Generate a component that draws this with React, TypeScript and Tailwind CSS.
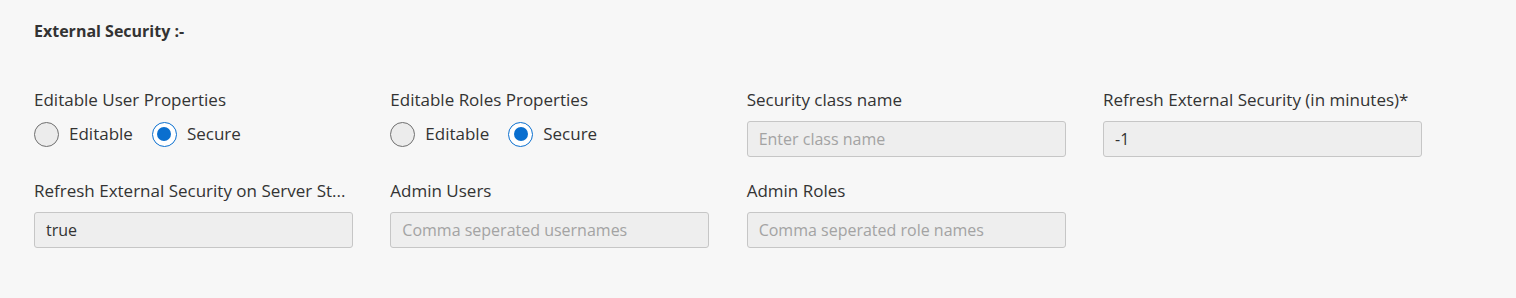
import React from "react";

const font = { fontFamily: '"Open Sans", "Noto Sans", sans-serif' };

function Radio({ checked, label }: { checked: boolean; label: string }) {
  return (
    <label className="flex items-center gap-[10px] h-[24px]">
      {checked ? (
        <span className="w-[25px] h-[25px] rounded-full border border-[#0a6fcf] bg-white flex items-center justify-center">
          <span className="w-[14px] h-[14px] rounded-full bg-[#0a6fcf]" />
        </span>
      ) : (
        <span className="w-[25px] h-[25px] rounded-full border border-[#6f6f6f] bg-[#ececec]" />
      )}
      <span className="text-[17px] text-[#333333]">{label}</span>
    </label>
  );
}

function RadioField({ label }: { label: string }) {
  return (
    <div className="flex flex-col">
      <div className="h-[24px] leading-[24px] text-[17px] text-[#333333] whitespace-nowrap">{label}</div>
      <div className="mt-[10px] flex items-center gap-[19px]">
        <Radio checked={false} label="Editable" />
        <Radio checked={true} label="Secure" />
      </div>
    </div>
  );
}

function InputField({ label, value, placeholder }: { label: string; value?: string; placeholder?: string }) {
  return (
    <div className="flex flex-col w-[319px]">
      <div className="h-[24px] leading-[24px] text-[17px] text-[#333333] whitespace-nowrap">{label}</div>
      <div className="mt-[9px] h-[36px] rounded-[3px] border border-[#c6c6c6] bg-[#eeeeee] flex items-center px-[11px] text-[16px]">
        {value ? (
          <span className="text-[#333333]">{value}</span>
        ) : (
          <span className="text-[#a3a3a3]">{placeholder}</span>
        )}
      </div>
    </div>
  );
}

export default function App() {
  return (
    <div className="w-[1516px] h-[298px] bg-[#f7f7f7] pl-[34px] pt-[21px]" style={font}>
      <div className="text-[16px] font-bold text-[#333333] leading-[20px]">External Security :-</div>
      <div className="mt-[47px] grid grid-cols-[repeat(4,319px)] gap-x-[37.33px] gap-y-[22px]">
        <RadioField label="Editable User Properties" />
        <RadioField label="Editable Roles Properties" />
        <InputField label="Security class name" placeholder="Enter class name" />
        <InputField label="Refresh External Security (in minutes)*" value="-1" />
        <InputField label="Refresh External Security on Server St..." value="true" />
        <InputField label="Admin Users" placeholder="Comma seperated usernames" />
        <InputField label="Admin Roles" placeholder="Comma seperated role names" />
      </div>
    </div>
  );
}
